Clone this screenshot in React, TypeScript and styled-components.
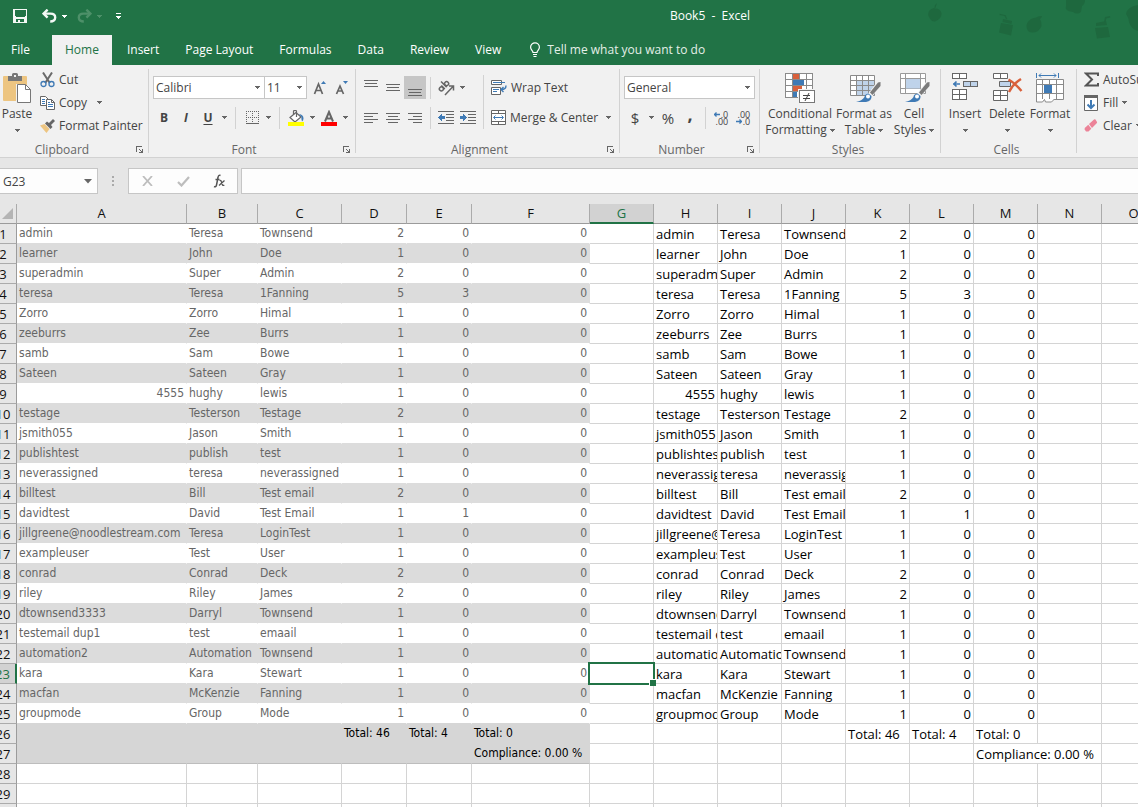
import React from 'react';
import styled, { createGlobalStyle, css } from 'styled-components';

const GREEN = '#217346';
const LINE = '#d4d4d4';
const GREY = '#666666';
const BLUE = '#3f7ab5';
const TAN = '#edc581';

const Global = createGlobalStyle`
  * { box-sizing: border-box; }
  body { margin: 0; background: #fff; }
  button, input, select { font: inherit; color: inherit; margin: 0; padding: 0; border: 0; background: none; border-radius: 0; outline: 0; }
  svg { display: block; flex: none; }
`;

const Window = styled.div`
  height: 100vh;
  display: flex;
  flex-direction: column;
  overflow: hidden;
  font-family: 'Open Sans', 'Noto Sans', sans-serif;
  font-size: 12px;
  line-height: 16px;
  color: #444;
  white-space: nowrap;
`;

/* ---------- title bar and tabs ---------- */

const Top = styled.header`
  position: relative;
  flex: none;
  background: ${GREEN};
  color: #fff;
`;
const Doodles = styled.svg`
  position: absolute;
  top: 0;
  right: 0;
`;
const TitleBar = styled.div`
  display: grid;
  grid-template-columns: 1fr auto 1fr;
  height: 35px;
  padding: 0 0 3px 9px;
  align-items: center;
`;
const QuickAccess = styled.div`
  display: flex;
  align-items: center;
`;
const QuickButton = styled.button<{ $w: number }>`
  width: ${p => p.$w}px;
  height: 22px;
  display: flex;
  align-items: center;
  justify-content: flex-end;
`;
const Title = styled.h1`
  margin: 0;
  padding-left: 273px;
  font-size: 12px;
  font-weight: 400;
  line-height: 16px;
`;
const Tabs = styled.nav`
  position: relative;
  display: flex;
  height: 30px;
`;
const Tab = styled.button<{ $active?: boolean; $file?: boolean }>`
  height: 30px;
  padding: 0 13px;
  ${p => p.$file && css`width: 52px; padding: 0 0 0 11px; text-align: left;`}
  ${p => p.$active && css`margin-right: 2px; background: #f1f1f1; color: ${GREEN};`}
`;
const TellMe = styled.button`
  display: flex;
  align-items: center;
  gap: 6px;
  padding: 0 15px;
  color: #e4efe8;
`;

/* ---------- ribbon ---------- */

const Ribbon = styled.section`
  flex: none;
  display: flex;
  height: 93px;
  background: #f1f1f1;
  border-bottom: 1px solid #d2d2d2;
  overflow: hidden;
`;
const GroupBox = styled.div<{ $w: number }>`
  flex: none;
  width: ${p => p.$w}px;
  display: flex;
  flex-direction: column;
`;
const GroupBody = styled.div`
  display: flex;
  height: 76px;
`;
const GroupFoot = styled.div<{ $shift?: boolean }>`
  display: flex;
  align-items: center;
  height: 16px;
  padding: 1px 4px 0 0;
  color: ${GREY};
  span { flex: 1; text-align: center; padding-right: ${p => (p.$shift ? 8 : 0)}px; }
`;
const Launcher = styled.button`
  width: 12px;
  height: 16px;
  display: flex;
  align-items: center;
  justify-content: flex-end;
`;
const Divider = styled.div`
  flex: none;
  width: 1px;
  height: 84px;
  margin-top: 4px;
  background: #d2d2d2;
`;
const Rule = styled.div<{ $tall?: boolean; $wide?: boolean }>`
  flex: none;
  width: 1px;
  height: ${p => (p.$tall ? 54 : 22)}px;
  margin: 0 ${p => (p.$wide ? 5 : 4)}px;
  background: #d2d2d2;
`;
const Stack = styled.div<{ $left?: number; $top?: number; $gap?: number }>`
  display: flex;
  flex-direction: column;
  gap: ${p => p.$gap ?? 0}px;
  padding: ${p => p.$top ?? 0}px 0 0 ${p => p.$left ?? 0}px;
`;
const Row = styled.div`
  display: flex;
  align-items: center;
  height: 23px;
`;
const ToolPair = styled(Row)`
  margin-left: 2px;
`;
const Tool = styled.button<{ $on?: boolean; $bold?: boolean; $italic?: boolean; $under?: boolean; $raised?: boolean; $size?: number }>`
  flex: none;
  width: 22px;
  height: 23px;
  padding-bottom: ${p => (p.$raised ? 8 : 0)}px;
  display: flex;
  align-items: center;
  justify-content: center;
  font-weight: ${p => (p.$bold ? 700 : 400)};
  font-style: ${p => (p.$italic ? 'italic' : 'normal')};
  font-size: ${p => p.$size ?? 12}px;
  text-decoration: ${p => (p.$under ? 'underline' : 'none')};
  text-underline-offset: 2px;
  background: ${p => (p.$on ? '#c6c6c6' : 'none')};
`;
const ArrowTool = styled.button<{ $w?: number }>`
  flex: none;
  width: ${p => p.$w ?? 11}px;
  height: 23px;
  display: flex;
  align-items: center;
  justify-content: center;
`;
const Labelled = styled.button`
  display: flex;
  align-items: center;
  gap: 4px;
  height: 23px;
`;
const BigTool = styled.button<{ $w: number }>`
  flex: none;
  width: ${p => p.$w}px;
  height: 76px;
  padding-top: 8px;
  display: flex;
  flex-direction: column;
  align-items: center;
  > svg:first-child { margin-bottom: 1px; }
`;
const BigLine = styled.span`
  display: flex;
  align-items: center;
  justify-content: center;
  gap: 3px;
  height: 16px;
`;
const BigTools = styled.div<{ $left: number }>`
  display: flex;
  padding-left: ${p => p.$left}px;
`;
const Combo = styled.label<{ $w: number }>`
  width: ${p => p.$w}px;
  height: 23px;
  display: grid;
  align-items: center;
  background: #fff;
  border: 1px solid #c6c6c6;
  & + & { margin-left: -1px; }
  select {
    grid-area: 1 / 1;
    appearance: none;
    height: 21px;
    padding-left: 2px;
    width: 100%;
  }
  svg { grid-area: 1 / 1; justify-self: end; margin-right: 4px; pointer-events: none; }
`;
const Decimals = styled.span`
  display: grid;
  justify-items: end;
  font-size: 9px;
  line-height: 7px;
  span { display: flex; align-items: center; gap: 1px; }
`;

/* ---------- formula bar ---------- */

const FormulaBar = styled.div`
  flex: none;
  display: flex;
  align-items: center;
  height: 46px;
  background: #e6e6e6;
`;
const Field = styled.div<{ $w?: number }>`
  ${p => (p.$w ? css`flex: none; width: ${p.$w}px;` : css`flex: 1; margin-left: 3px; border-right-width: 0 !important;`)}
  height: 26px;
  display: flex;
  align-items: center;
  background: #fdfdfd;
  border: 1px solid #c6c6c6;
  input { flex: 1; min-width: 0; height: 24px; padding-left: 3px; }
`;
const NameField = styled(Field)`
  border-left: 0;
`;
const Grip = styled.div`
  width: 30px;
  display: flex;
  justify-content: center;
`;
const FxButton = styled.button`
  flex: 1;
  height: 24px;
  display: flex;
  align-items: center;
  justify-content: center;
`;

/* ---------- sheet ---------- */

const Sheet = styled.main`
  flex: 1;
  min-height: 0;
  overflow: hidden;
  background: #fff;
`;
const Grid = styled.table`
  table-layout: fixed;
  border-collapse: separate;
  border-spacing: 0;
  width: 1176px;
  margin-left: -10px;
  color: #000;
`;
const ColHead = styled.th<{ $on?: boolean }>`
  height: 20px;
  padding: 0 0 1px;
  font-weight: 400;
  font-size: 13px;
  line-height: 18px;
  background: ${p => (p.$on ? '#d2d2d2' : '#e6e6e6')};
  color: ${p => (p.$on ? GREEN : '#111')};
  border-right: 1px solid #ababab;
  border-bottom: 1px solid #9b9b9b;
  ${p => p.$on && css`padding: 0; border-bottom: 2px solid ${GREEN};`}
`;
const Corner = styled.th`
  height: 20px;
  padding: 0;
  background: #e6e6e6;
  border-right: 1px solid #ababab;
  border-bottom: 1px solid #9b9b9b;
  svg { margin-left: auto; margin-right: 3px; }
`;
const RowHead = styled.th<{ $on?: boolean }>`
  height: 20px;
  padding: 1px 0 0;
  font-weight: 400;
  font-size: 13px;
  line-height: 18px;
  text-align: center;
  background: ${p => (p.$on ? '#d2d2d2' : '#e6e6e6')};
  color: ${p => (p.$on ? GREEN : '#111')};
  border-right: ${p => (p.$on ? `2px solid ${GREEN}` : '1px solid #9b9b9b')};
  border-bottom: 1px solid #ababab;
`;
const Cell = styled.td<{ $num?: boolean }>`
  height: 20px;
  padding: 1px 2px 0;
  overflow: hidden;
  white-space: nowrap;
  font-family: 'Open Sans', sans-serif;
  font-size: 13px;
  line-height: 18px;
  text-align: ${p => (p.$num ? 'right' : 'left')};
  border-right: 1px solid ${LINE};
  border-bottom: 1px solid ${LINE};
`;
const ReportCell = styled.td<{ $num?: boolean; $fill: string; $edge: string; $total?: boolean }>`
  height: 20px;
  padding: 0 2px 1px;
  overflow: hidden;
  white-space: nowrap;
  font-family: 'DejaVu Sans Condensed', 'DejaVu Sans', sans-serif;
  font-size: 12px;
  line-height: 18px;
  text-align: ${p => (p.$num ? 'right' : 'left')};
  color: ${p => (p.$total ? '#000' : '#666')};
  background: ${p => p.$fill};
  border-right: 1px solid ${p => p.$fill};
  border-bottom: 1px solid ${p => p.$edge};
`;
const ActiveCell = styled(Cell)`
  position: relative;
  overflow: visible;
`;
const Selection = styled.div`
  position: absolute;
  inset: -2px;
  border: 2px solid ${GREEN};
  &::after {
    content: '';
    position: absolute;
    right: -3px;
    bottom: -3px;
    width: 6px;
    height: 6px;
    background: ${GREEN};
    border: solid #fff;
    border-width: 1px 0 0 1px;
  }
`;

const columns: [string, number][] = [
  ['A', 170], ['B', 71], ['C', 84], ['D', 65], ['E', 65], ['F', 118], ['G', 64],
  ['H', 64], ['I', 64], ['J', 64], ['K', 64], ['L', 64], ['M', 64], ['N', 64], ['O', 64],
];

const people: [string, string, string, number, number][] = [
  ['admin', 'Teresa', 'Townsend', 2, 0],
  ['learner', 'John', 'Doe', 1, 0],
  ['superadmin', 'Super', 'Admin', 2, 0],
  ['teresa', 'Teresa', '1Fanning', 5, 3],
  ['Zorro', 'Zorro', 'Himal', 1, 0],
  ['zeeburrs', 'Zee', 'Burrs', 1, 0],
  ['samb', 'Sam', 'Bowe', 1, 0],
  ['Sateen', 'Sateen', 'Gray', 1, 0],
  ['4555', 'hughy', 'lewis', 1, 0],
  ['testage', 'Testerson', 'Testage', 2, 0],
  ['jsmith055', 'Jason', 'Smith', 1, 0],
  ['publishtest', 'publish', 'test', 1, 0],
  ['neverassigned', 'teresa', 'neverassigned', 1, 0],
  ['billtest', 'Bill', 'Test email', 2, 0],
  ['davidtest', 'David', 'Test Email', 1, 1],
  ['jillgreene@noodlestream.com', 'Teresa', 'LoginTest', 1, 0],
  ['exampleuser', 'Test', 'User', 1, 0],
  ['conrad', 'Conrad', 'Deck', 2, 0],
  ['riley', 'Riley', 'James', 2, 0],
  ['dtownsend3333', 'Darryl', 'Townsend', 1, 0],
  ['testemail dup1', 'test', 'emaail', 1, 0],
  ['automation2', 'Automation', 'Townsend', 1, 0],
  ['kara', 'Kara', 'Stewart', 1, 0],
  ['macfan', 'McKenzie', 'Fanning', 1, 0],
  ['groupmode', 'Group', 'Mode', 1, 0],
];

const totals: string[][] = [
  ['', '', '', 'Total: 46', 'Total: 4', 'Total: 0'],
  ['', '', '', '', '', 'Compliance: 0.00 %'],
];

const STRIPE = '#dcdcdc';
const TOTAL = '#d6d6d6';
const fillOf = (i: number) => (i >= 25 ? TOTAL : i % 2 ? STRIPE : '#fff');

/* ---------- icons ---------- */

const Caret = ({ color = GREY }: { color?: string }) => (
  <svg width="5" height="3" viewBox="0 0 5 3" shapeRendering="crispEdges">
    <path d="M0 0h5v1h-1v1h-1v1h-1v-1h-1v-1h-1z" fill={color} />
  </svg>
);

const LaunchIcon = () => (
  <svg width="8" height="8" viewBox="0 0 8 8" fill="none" stroke={GREY} shapeRendering="crispEdges">
    <path d="M.5 6V.5H6M3 3l3 3" />
    <path d="M7 3v4H3v-1h2V5h1V3z" fill={GREY} stroke="none" />
  </svg>
);

const SaveIcon = () => (
  <svg width="14" height="14" viewBox="0 0 14 14" shapeRendering="crispEdges">
    <path fillRule="evenodd" fill="#f4f8f5" d="M0 0h14v14H0zM2 1v6h1v1h9V7h1V1zM3 10v3h2v-2h2v2h4v-3z" />
  </svg>
);

const UndoIcon = ({ flip = false }: { flip?: boolean }) => (
  <svg width="15" height="14" viewBox="0 0 15 14" fill="none">
    <g transform={flip ? 'matrix(-1 0 0 1 15 0)' : undefined} stroke={flip ? '#4d9069' : '#f4f8f5'}>
      <path d="M2 4.6h6.500c3 0 4.700 1.600 4.700 3.900 0 2.600-2 4-5 4" strokeWidth="2.4" />
      <path d="M5.600.600 1.600 4.600l4 4" strokeWidth="2.4" />
    </g>
  </svg>
);

const CustomIcon = () => (
  <svg width="6" height="7" viewBox="0 0 6 7" shapeRendering="crispEdges">
    <path d="M0 0h5v1H0zM0 3h5v1H4v1H3v1H2V5H1V4H0z" fill="#fff" />
  </svg>
);

const BulbIcon = () => (
  <svg width="12" height="16" viewBox="0 0 12 16" fill="none" stroke="#fff" strokeWidth="1.2">
    <path d="M4 10.5C4 8.500 1.600 8 1.600 5.300a4.400 4.400 0 0 1 8.800 0C10.400 8 8 8.500 8 10.500zM4 12.500h4M4.500 14.500h3" />
  </svg>
);

const PasteIcon = () => (
  <svg width="28" height="32" viewBox="0 0 28 32">
    <rect x="0" y="3" width="24" height="25" rx="1" fill={TAN} />
    <path d="M5 3h4V1.500Q9 0 10.500 0h3Q15 0 15 1.500V3h4v5H5z" fill="#777" />
    <rect x="11" y="2" width="2" height="2" fill="#f1f1f1" />
    <path d="M13 11h9l6 6v14H13z" fill="#f1f1f1" />
    <path d="M14.500 11.500h8l5 5v13h-13z" fill="#fff" stroke="#777" />
    <path d="M22.500 11.500v5h5" fill="none" stroke="#777" />
  </svg>
);

const CutIcon = () => (
  <svg width="15" height="16" viewBox="0 0 15 16" fill="none">
    <path d="M3 .5 9.800 11M12 .5 5.200 11" stroke="#6a6a6a" strokeWidth="2" />
    <circle cx="3.500" cy="12" r="2.500" stroke={BLUE} strokeWidth="1.300" />
    <circle cx="11.500" cy="12" r="2.500" stroke={BLUE} strokeWidth="1.300" />
  </svg>
);

const CopyIcon = () => (
  <svg width="15" height="14" viewBox="0 0 15 14" fill="none">
    <path d="M.5.500h5l3 3v6h-8z" fill="#fff" stroke={GREY} />
    <path d="M2 3.500h3M2 5.500h3M2 7.500h3" stroke={BLUE} />
    <path d="M6.500 3.500h5l3 3v7h-8z" fill="#fff" stroke={GREY} />
    <path d="M11.500 3.500v3h3" stroke={GREY} />
    <path d="M8 6.500h2M8 8.500h5M8 10.500h5" stroke={BLUE} />
  </svg>
);

const PainterIcon = () => (
  <svg width="15" height="14" viewBox="0 0 15 14">
    <path d="M0 6.500 4.500 5l5 5L6.500 14z" fill={TAN} />
    <path d="M5 4.500 7 2.500l2 1.500L13 0l2 2-4 4 1.500 2L10.500 10z" fill={GREY} />
  </svg>
);

const GrowIcon = ({ shrink = false }: { shrink?: boolean }) => (
  <svg width="14" height="16" viewBox="0 0 14 16" fill="none">
    {shrink ? (
      <g>
        <path d="M1.500 14 5 6l3.500 8M3 11h4" stroke={GREY} strokeWidth="1.700" />
        <path d="M8 1h5L10.500 4z" fill={BLUE} />
      </g>
    ) : (
      <g>
        <path d="M1.500 14 5.500 4l4 10M3 10.500h5" stroke={GREY} strokeWidth="1.700" />
        <path d="M8 4h5L10.500 1z" fill={BLUE} />
      </g>
    )}
  </svg>
);

const BordersIcon = () => (
  <svg width="13" height="14" viewBox="0 0 13 14" fill="none" stroke={GREY} shapeRendering="crispEdges">
    <path d="M.5 0v12M6.500 0v12M12.500 0v12M0 .5h13M0 6.500h13" strokeDasharray="1 1" />
    <path d="M0 12.500h13" />
  </svg>
);

const FillColorIcon = () => (
  <svg width="16" height="16" viewBox="0 0 16 16" fill="none">
    <path d="M2 7.500 8 2.500l5 4.500-6 5z" fill="#fff" stroke={GREY} strokeWidth="1.200" />
    <path d="M5.500 5V1.500Q5.500.500 6.500.500h1q1 0 1 1V7" stroke={GREY} strokeWidth="1.200" />
    <path d="M11 4q4.500.500 4.500 4.500 0 2-1.500 3-1-2.500-.500-4.500z" fill={BLUE} />
    <rect y="12" width="16" height="4" fill="#ff0" />
  </svg>
);

const FontColorIcon = () => (
  <svg width="16" height="16" viewBox="0 0 16 16" fill="none">
    <path d="M4 11.500 8 2l4 9.500M5.500 8.500h5" stroke={GREY} strokeWidth="2" />
    <rect y="12" width="16" height="4" fill="#f00" />
  </svg>
);

const LinesIcon = ({ rows, h = 14 }: { rows: [number, number, number][]; h?: number }) => (
  <svg width="14" height={h} viewBox={`0 0 14 ${h}`} shapeRendering="crispEdges" fill={GREY}>
    {rows.map(([x, y, w]) => <rect key={y} x={x} y={y} width={w} height="1" />)}
  </svg>
);

const OrientIcon = () => (
  <svg width="17" height="16" viewBox="0 0 17 16" fill="none" stroke={GREY} strokeWidth="1.500">
    <path d="M7 15 15 6.500M11 6h4.500v4.500" />
    <g transform="rotate(-45 6 7)">
      <circle cx="2.800" cy="6.500" r="2" /><path d="M5.200 4v5" />
      <path d="M7.800 1V9" /><circle cx="10.200" cy="6.500" r="2" />
    </g>
  </svg>
);

const IndentIcon = ({ out = false }: { out?: boolean }) => (
  <svg width="16" height="13" viewBox="0 0 16 13" shapeRendering="crispEdges">
    <path d="M0 0h16v1H0zM8 3h8v1H8zM8 6h8v1H8zM8 9h8v1H8zM0 12h16v1H0z" fill={GREY} />
    {out
      ? <path d="M0 6h1V5h1V4h1V3h1v2h3v3H4v2H3V9H2V8H1V7H0z" fill={BLUE} />
      : <path d="M7 6H6V5H5V4H4V3H3v2H0v3h3v2h1V9h1V8h1V7h1z" fill={BLUE} />}
  </svg>
);

const WrapIcon = () => (
  <svg width="16" height="15" viewBox="0 0 16 15" fill="none">
    <path d="M.5.500h10v4H.500zM.500 7.500h9v7h-9z" fill="#fff" stroke={GREY} />
    <path d="M2 2.500h12M2 9.500h6M2 11.500h4" stroke={BLUE} />
    <path d="M15 5.500q0 4-4.500 4M12.500 7 10 9.500l2.500 2.500" stroke={BLUE} strokeWidth="1.400" />
  </svg>
);

const MergeIcon = () => (
  <svg width="15" height="15" viewBox="0 0 15 15" fill="none" stroke={GREY}>
    <path d="M.5.500h14v14H.500z" fill="#fff" />
    <path d="M0 3.500h15M0 11.500h15M7.500 0v3M7.500 12v3" />
    <path d="M3 7.500h9M4.500 5.500l-2 2 2 2M10.500 5.500l2 2-2 2" stroke={BLUE} />
  </svg>
);

const MiniArrow = ({ right = false }: { right?: boolean }) => (
  <svg width="6" height="5" viewBox="0 0 6 5" fill="none" stroke={BLUE} strokeWidth="1.300">
    {right ? <path d="M0 2.500h5.500M3.500.500l2 2-2 2" /> : <path d="M6 2.500H.500M2.500.500l-2 2 2 2" />}
  </svg>
);

const Brush = () => (
  <g>
    <path d="M15 26 28 9h3.500v3L21 27z" fill="#f1f1f1" />
    <path d="M21 19.500 29 9.500l2.500-.500v4l-8 9z" fill="#7a7a7a" />
    <path d="M15.500 24q0-3 4-3.500l3 2.500q.500 5-5.500 6H7q6-1 8.500-5z" fill={BLUE} />
    <circle cx="19" cy="23.500" r="2" fill="#fff" />
  </g>
);

const ConditionalIcon = () => (
  <svg width="30" height="32" viewBox="0 0 30 32" shapeRendering="crispEdges">
    <path d="M0 0h28v25H0z" fill="#fff" />
    <path d="M.5.500h27v24H.500zM7.500 0v25M14.500 0v25M21.500 0v25M0 6.500h28M0 12.500h28M0 18.500h28" fill="none" stroke="#8a8a8a" />
    <path d="M8 1h6v5H8zM8 13h9v5H8z" fill="#d9603b" />
    <path d="M8 7h11v5H8zM8 19h4v5H8z" fill={BLUE} />
    <path d="M13 16h17v15H13z" fill="#f1f1f1" />
    <path d="M14.500 17.500h15v12h-15z" fill="#fff" stroke="#777" />
    <path d="M18 22.500h7M18 25.500h7M24 20l-4 8" stroke="#444" fill="none" shapeRendering="auto" />
  </svg>
);

const FormatTableIcon = () => (
  <svg width="34" height="32" viewBox="-2 0 34 32">
    <path d="M1.500 2.500h24v20h-24z" fill="#fff" />
    <path d="M8 8h18v15H8z" fill="#bfd3ea" />
    <path d="M1.500 2.500h24v20h-24zM7.500 2v21M13.500 2v21M19.500 2v21M1 7.500h25M1 12.500h25M1 17.500h25" fill="none" stroke="#8a8a8a" />
    <Brush />
  </svg>
);

const CellStylesIcon = () => (
  <svg width="32" height="32" viewBox="0 0 32 32">
    <path d="M2.500.500h25v20h-25z" fill="#fff" />
    <path d="M2.500.500h25v20h-25zM7.500 0v21M22.500 0v21M2 5.500h26M2 15.500h26" fill="none" stroke="#9a9a9a" />
    <path d="M8 6h14v9.500H8z" fill="#bfd3ea" />
    <Brush />
  </svg>
);

const InsertIcon = () => (
  <svg width="26" height="32" viewBox="0 0 26 32" fill="none" stroke={GREY} shapeRendering="crispEdges">
    <path d="M.5.500h14v5H.500zM7.500 0v6M.500 16.500h14v10H.500zM7.500 17v10M0 21.500h15" fill="#fff" />
    <path d="M11.500 8.500h14v5h-14zM18.500 8v6" fill="#bfd3ea" />
    <path d="M1 11h7M4.500 8.500 2 11l2.500 2.500" stroke={BLUE} strokeWidth="1.700" shapeRendering="auto" />
  </svg>
);

const DeleteIcon = () => (
  <svg width="32" height="32" viewBox="-2 0 32 32" fill="none" stroke={GREY}>
    <path d="M.5.500h14v5H.500zM7.500 0v6M.500 17.500h14v10H.500zM7.500 17v10M0 22.500h15" fill="#fff" />
    <path d="M6.500 8.500h11v5h-11z" fill="#bfd3ea" />
    <path d="M15.500 6.500Q22 10 28.500 18M28 6Q20 11 16 19" stroke="#d9603b" strokeWidth="2.400" />
  </svg>
);

const FormatIcon = () => (
  <svg width="28" height="32" viewBox="0 0 28 32" fill="none">
    <path d="M.5 6.500h27v20H.500z" fill="#fff" />
    <path d="M.5 6.500h27v20H.500zM6.500 6v21M20.500 6v21M13.500 6v21M0 11.500h28M0 20.500h28" stroke="#8a8a8a" />
    <path d="M8 12h8v8H8z" fill={BLUE} />
    <path d="M.5 0v5M22.500 0v5M3 2.500h17M5 .500l-2 2 2 2M18 .500l2 2-2 2" stroke={BLUE} />
    <path d="M.5 26v3h6l2-2.500 1 2.500h6l3-3" stroke="#8a8a8a" fill="#fff" />
  </svg>
);

const SigmaIcon = () => (
  <svg width="15" height="15" viewBox="0 0 15 15" fill="none">
    <path d="M14 4V1.500H2l6 6-6 6h12V11" stroke="#555" strokeWidth="2" />
  </svg>
);

const FillIcon = () => (
  <svg width="15" height="16" viewBox="0 0 15 16" fill="none">
    <path d="M.5.500h13v15H.500z" fill="#fff" stroke={GREY} />
    <path d="M0 0h14v3H0z" fill={GREY} />
    <path d="M7 5v8M3.500 9.500 7 13l3.500-3.500" stroke={BLUE} strokeWidth="2" />
  </svg>
);

const EraserIcon = () => (
  <svg width="15" height="14" viewBox="0 0 15 14">
    <path d="M5 5 10 .500q.800-.500 1.500 0L13 3q.300.700-.300 1.300L8 9z" fill="#ec8398" />
    <path d="M4.300 5.700 7.300 9.700 4.500 12.500H2L.700 10.500v-1.500z" fill="#ec8398" />
  </svg>
);

const Pattern = () => (
  <Doodles width="210" height="60" viewBox="0 0 210 60" fill="#1e683e" aria-hidden="true">
    <path d="M6 8q-7 2-5.500 8Q3 22 7 21.500 14 19 13.500 13 12 8 6.500 8.500 6 5 9 3q-1 3-1.500 5z" />
    <path d="m73 23 12 2-2 10.500-12-3zM75 19l9 2-.500 3-9-2zM78 19l-1.500-3-5-1 .300-1.300 6 1.500 1.500 4z" />
    <path d="M103 19q6-3 9 0 4 7-2 12-6 3-10 0-4-7 3-12zM108 18q1-2 6-2-1 4-5 3z" />
    <path d="M138 0h19q0 4-3 6l-1 6q-4 3-8 0-9-1-7-6z" />
    <path d="m167 28 13-1 2 10-13 1.500zM168 23l10-2 1 4-11 1zM176 22l1-5 5-1 .300 1.500-4 1-.800 4z" />
    <path d="M210 5q-11 2-12 9 3 4 3 8 2 7 9 9z" />
  </Doodles>
);

/* ---------- parts ---------- */

const Group = ({ w, name, launch, shift, children }: {
  w: number; name: string; launch?: boolean; shift?: boolean; children: React.ReactNode;
}) => (
  <>
    <GroupBox $w={w}>
      <GroupBody>{children}</GroupBody>
      <GroupFoot $shift={shift}>
        <span>{name}</span>
        {launch && <Launcher aria-label={`${name} settings`}><LaunchIcon /></Launcher>}
      </GroupFoot>
    </GroupBox>
    <Divider />
  </>
);

const isNum = (v: string) => /^\d+$/.test(v);

function SheetRow({ index }: { index: number }) {
  const n = index + 1;
  const person = people[index];
  const left = person ? [...person.map(String), '0'] : totals[index - 25];
  const edge = index === 26 ? '#bdbdbd' : fillOf(index + 1);
  const right = left ?? ['', '', '', '', '', ''];
  const spill = n === 27;
  return (
    <tr>
      <RowHead scope="row" $on={n === 23}>{n}</RowHead>
      {left
        ? left.map((v, c) => (
          <ReportCell key={c} $num={isNum(v)} $fill={fillOf(index)} $edge={edge} $total={index >= 25}>{v}</ReportCell>
        ))
        : right.map((_, c) => <Cell key={c} />)}
      {n === 23 ? <ActiveCell><Selection /></ActiveCell> : <Cell />}
      {right.map((v, c) => (
        <Cell key={c} $num={isNum(v)} colSpan={spill && c === 5 ? 2 : 1}>{v}</Cell>
      ))}
      {!spill && <Cell />}
      <Cell />
    </tr>
  );
}

export default function App() {
  return (
    <Window>
      <Global />
      <Top>
        <Pattern />
        <TitleBar>
          <QuickAccess>
            <QuickButton $w={18} aria-label="Save"><SaveIcon /></QuickButton>
            <QuickButton $w={30} aria-label="Undo"><UndoIcon /></QuickButton>
            <QuickButton $w={10} aria-label="Undo history"><Caret color="#fff" /></QuickButton>
            <QuickButton $w={25} aria-label="Redo"><UndoIcon flip /></QuickButton>
            <QuickButton $w={10} aria-label="Redo history"><Caret color="#4d9069" /></QuickButton>
            <QuickButton $w={20} aria-label="Customize toolbar"><CustomIcon /></QuickButton>
          </QuickAccess>
          <Title>Book5&nbsp; - &nbsp;Excel</Title>
        </TitleBar>
        <Tabs>
          <Tab $file>File</Tab>
          <Tab $active>Home</Tab>
          <Tab>Insert</Tab>
          <Tab>Page Layout</Tab>
          <Tab>Formulas</Tab>
          <Tab>Data</Tab>
          <Tab>Review</Tab>
          <Tab>View</Tab>
          <TellMe><BulbIcon />Tell me what you want to do</TellMe>
        </Tabs>
      </Top>

      <Ribbon>
        <Group w={148} name="Clipboard" launch shift>
          <BigTool $w={34}>
            <PasteIcon /><BigLine>Paste</BigLine><BigLine><Caret /></BigLine>
          </BigTool>
          <Stack $left={6} $top={3}>
            <Labelled><CutIcon />Cut</Labelled>
            <Row>
              <Labelled><CopyIcon />Copy</Labelled>
              <ArrowTool $w={24} aria-label="Copy options"><Caret /></ArrowTool>
            </Row>
            <Labelled><PainterIcon />Format Painter</Labelled>
          </Stack>
        </Group>

        <Group w={206} name="Font" launch>
          <Stack $left={4} $top={11} $gap={7}>
            <Row>
              <Combo $w={112}>
                <select aria-label="Font"><option>Calibri</option></select><Caret />
              </Combo>
              <Combo $w={43}>
                <select aria-label="Font size"><option>11</option></select><Caret />
              </Combo>
              <ToolPair>
                <Tool aria-label="Increase font size"><GrowIcon /></Tool>
                <Tool aria-label="Decrease font size"><GrowIcon shrink /></Tool>
              </ToolPair>
            </Row>
            <Row>
              <Tool $bold>B</Tool>
              <Tool $bold $italic>I</Tool>
              <Tool $bold $under>U</Tool>
              <ArrowTool aria-label="Underline options"><Caret /></ArrowTool>
              <Rule $wide />
              <Tool aria-label="Borders"><BordersIcon /></Tool>
              <ArrowTool aria-label="Border options"><Caret /></ArrowTool>
              <Rule $wide />
              <Tool aria-label="Fill color"><FillColorIcon /></Tool>
              <ArrowTool aria-label="Fill color options"><Caret /></ArrowTool>
              <Tool aria-label="Font color"><FontColorIcon /></Tool>
              <ArrowTool aria-label="Font color options"><Caret /></ArrowTool>
            </Row>
          </Stack>
        </Group>

        <Group w={263} name="Alignment" launch>
          <Stack $left={4} $top={11} $gap={7}>
            <Row>
              <Tool aria-label="Top align"><LinesIcon h={16} rows={[[0, 0, 14], [1, 3, 12], [0, 6, 14]]} /></Tool>
              <Tool aria-label="Middle align"><LinesIcon h={16} rows={[[0, 4, 14], [1, 7, 12], [0, 10, 14]]} /></Tool>
              <Tool $on aria-label="Bottom align"><LinesIcon h={16} rows={[[0, 9, 14], [1, 12, 12], [0, 15, 14]]} /></Tool>
              <Rule />
              <Tool aria-label="Orientation"><OrientIcon /></Tool>
              <ArrowTool aria-label="Orientation options"><Caret /></ArrowTool>
            </Row>
            <Row>
              <Tool aria-label="Align left"><LinesIcon rows={[[0, 2, 14], [0, 5, 9], [0, 8, 14], [0, 11, 9]]} /></Tool>
              <Tool aria-label="Center"><LinesIcon rows={[[0, 2, 14], [2, 5, 10], [0, 8, 14], [2, 11, 10]]} /></Tool>
              <Tool aria-label="Align right"><LinesIcon rows={[[0, 2, 14], [5, 5, 9], [0, 8, 14], [5, 11, 9]]} /></Tool>
              <Rule />
              <Tool aria-label="Decrease indent"><IndentIcon out /></Tool>
              <Tool aria-label="Increase indent"><IndentIcon /></Tool>
            </Row>
          </Stack>
          <Stack $top={10}><Rule $tall /></Stack>
          <Stack $left={3} $top={11} $gap={7}>
            <Labelled><WrapIcon />Wrap Text</Labelled>
            <Row>
              <Labelled><MergeIcon />Merge &amp; Center</Labelled>
              <ArrowTool $w={20} aria-label="Merge options"><Caret /></ArrowTool>
            </Row>
          </Stack>
        </Group>

        <Group w={139} name="Number" launch>
          <Stack $left={4} $top={11} $gap={7}>
            <Combo $w={131}>
              <select aria-label="Number format"><option>General</option></select><Caret />
            </Combo>
            <Row>
              <Tool $size={15}>$</Tool>
              <ArrowTool aria-label="Currency options"><Caret /></ArrowTool>
              <Tool $size={15}>%</Tool>
              <Tool $size={18} $bold $raised>,</Tool>
              <Rule />
              <Tool><Decimals><span><MiniArrow />.0</span><span>.00</span></Decimals></Tool>
              <Tool><Decimals><span>.00</span><span><MiniArrow right />.0</span></Decimals></Tool>
            </Row>
          </Stack>
        </Group>

        <Group w={180} name="Styles">
          <BigTools $left={4}>
            <BigTool $w={72}>
              <ConditionalIcon /><BigLine>Conditional</BigLine><BigLine>Formatting<Caret /></BigLine>
            </BigTool>
            <BigTool $w={56}>
              <FormatTableIcon /><BigLine>Format as</BigLine><BigLine>Table<Caret /></BigLine>
            </BigTool>
            <BigTool $w={44}>
              <CellStylesIcon /><BigLine>Cell</BigLine><BigLine>Styles<Caret /></BigLine>
            </BigTool>
          </BigTools>
        </Group>

        <Group w={135} name="Cells">
          <BigTools $left={3}>
            <BigTool $w={42}>
              <InsertIcon /><BigLine>Insert</BigLine><BigLine><Caret /></BigLine>
            </BigTool>
            <BigTool $w={42}>
              <DeleteIcon /><BigLine>Delete</BigLine><BigLine><Caret /></BigLine>
            </BigTool>
            <BigTool $w={44}>
              <FormatIcon /><BigLine>Format</BigLine><BigLine><Caret /></BigLine>
            </BigTool>
          </BigTools>
        </Group>

        <Stack $left={7} $top={3}>
          <Labelled><SigmaIcon />AutoSum</Labelled>
          <Labelled><FillIcon />Fill<Caret /></Labelled>
          <Labelled><EraserIcon />Clear<Caret /></Labelled>
        </Stack>
      </Ribbon>

      <FormulaBar>
        <NameField $w={98}>
          <input aria-label="Name box" defaultValue="G23" />
          <ArrowTool $w={18} aria-label="Name list">
            <svg width="8" height="5" viewBox="0 0 8 5"><path d="M0 0h8L4 4.500z" fill={GREY} /></svg>
          </ArrowTool>
        </NameField>
        <Grip>
          <svg width="2" height="10" viewBox="0 0 2 10"><path d="M0 0h2v2H0zM0 4h2v2H0zM0 8h2v2H0z" fill="#aaa" /></svg>
        </Grip>
        <Field $w={110}>
          <FxButton aria-label="Cancel">
            <svg width="11" height="10" viewBox="0 0 11 10"><path d="m1 0 9 10M10 0 1 10" stroke="#bdbdbd" strokeWidth="1.800" /></svg>
          </FxButton>
          <FxButton aria-label="Enter">
            <svg width="13" height="11" viewBox="0 0 13 11"><path d="m1 6 3.500 3.500L12 1" fill="none" stroke="#bdbdbd" strokeWidth="2.200" /></svg>
          </FxButton>
          <FxButton aria-label="Insert function">
            <svg width="13" height="14" viewBox="0 0 13 14" fill="none" stroke="#555">
              <path d="M7.500 1.500Q5.500.500 5 3.500L3.500 11q-.500 2.500-2.500 1.500M2.500 5.500h4" strokeWidth="1.500" />
              <path d="M6.500 6.500q1.500-.500 2 1.500l.800 2.500q.500 1.500 2 .500M11.500 6.500 6 11.500" strokeWidth="1.300" />
            </svg>
          </FxButton>
        </Field>
        <Field><input aria-label="Formula" /></Field>
      </FormulaBar>

      <Sheet>
        <Grid>
          <colgroup>
            <col width="27" />
            {columns.map(([name, w]) => <col key={name} width={w} />)}
          </colgroup>
          <thead>
            <tr>
              <Corner aria-label="Select all">
                <svg width="11" height="11" viewBox="0 0 11 11"><path d="M11 0v11H0z" fill="#b4b4b4" /></svg>
              </Corner>
              {columns.map(([name]) => <ColHead key={name} scope="col" $on={name === 'G'}>{name}</ColHead>)}
            </tr>
          </thead>
          <tbody>
            {Array.from({ length: 30 }, (_, i) => <SheetRow key={i} index={i} />)}
          </tbody>
        </Grid>
      </Sheet>
    </Window>
  );
}
